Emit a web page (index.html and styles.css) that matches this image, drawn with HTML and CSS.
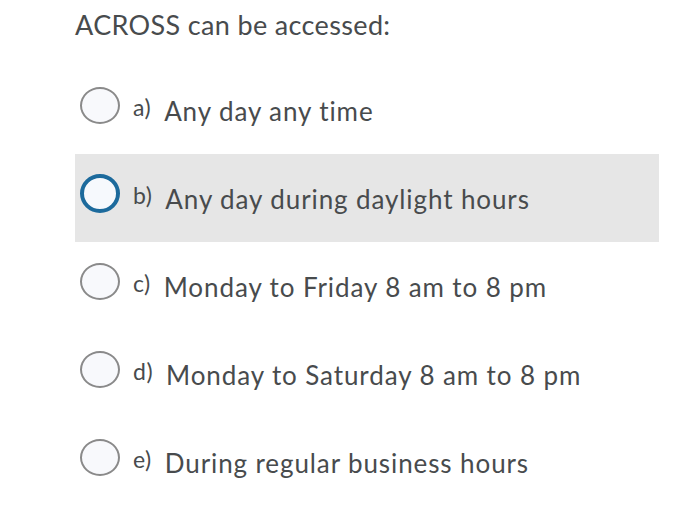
FILE: index.html
```html
<!DOCTYPE html>
<html lang="en">
<head>
<meta charset="utf-8">
<title>ACROSS question</title>
<link rel="stylesheet" href="styles.css">
</head>
<body>
<div class="page">
  <h1 class="question">ACROSS can be accessed:</h1>
  <div class="options">
    <div class="option">
      <span class="radio"></span>
      <span class="text"><span class="label">a)</span>Any day any time</span>
    </div>
    <div class="option option-focus">
      <span class="radio radio-focus"></span>
      <span class="text"><span class="label">b)</span>Any day during daylight hours</span>
    </div>
    <div class="option">
      <span class="radio"></span>
      <span class="text"><span class="label">c)</span>Monday to Friday 8 am to 8 pm</span>
    </div>
    <div class="option">
      <span class="radio"></span>
      <span class="text"><span class="label">d)</span>Monday to Saturday 8 am to 8 pm</span>
    </div>
    <div class="option">
      <span class="radio"></span>
      <span class="text"><span class="label">e)</span>During regular business hours</span>
    </div>
  </div>
</div>
</body>
</html>
```

FILE: styles.css
```css
html, body {
  margin: 0;
  padding: 0;
  background: #ffffff;
}

body {
  font-family: Lato, "Open Sans", sans-serif;
  color: #484b4d;
}

.page {
  padding-left: 75px;
  width: 584px;
}

.question {
  margin: 5px 0 0 0;
  font-size: 27px;
  line-height: 40px;
  font-weight: 400;
  letter-spacing: 0.35px;
  color: #484b4d;
}

.options {
  margin-top: 21px;
  display: flex;
  flex-direction: column;
}

.option {
  height: 88px;
  display: flex;
  align-items: center;
  padding-left: 5px;
}

.option-focus {
  background: #e6e6e6;
}

.radio {
  box-sizing: border-box;
  width: 40px;
  height: 37px;
  border-radius: 50%;
  border: 2px solid #8a8a8a;
  background: #f8f9fc;
  margin-bottom: 10px;
  margin-right: 13px;
  flex: none;
}

.radio-focus {
  border: 4px solid #1c6a9c;
  background: #f6f9fd;
  height: 39px;
}

.text {
  font-size: 26px;
  line-height: 30px;
  letter-spacing: 0.9px;
  white-space: nowrap;
  margin-bottom: 3px;
}

.label {
  font-size: 23px;
  letter-spacing: 0.5px;
  vertical-align: 5px;
  margin-right: 13px;
}
```
